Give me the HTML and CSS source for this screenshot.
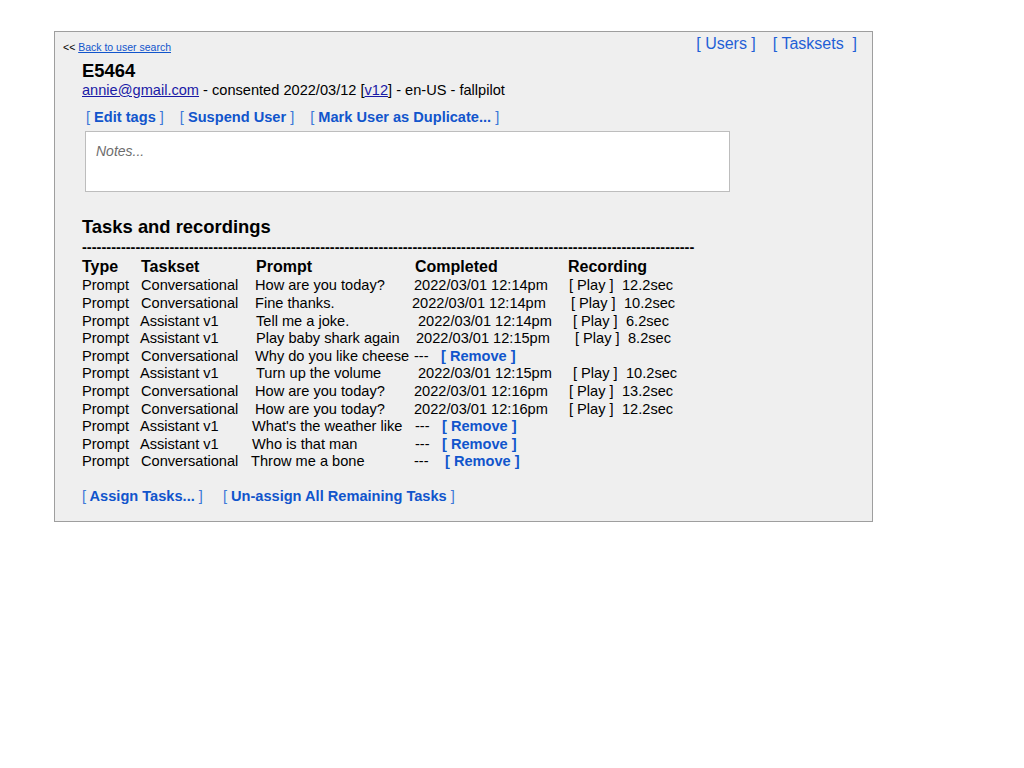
FILE: index.html
```html
<!DOCTYPE html>
<html lang="en">
<head>
<meta charset="utf-8">
<title>E5464</title>
<link rel="stylesheet" href="styles.css">
</head>
<body>
<div class="panel">
  <div class="topbar">
    <div class="back">&lt;&lt; <a href="#">Back to user search</a></div>
    <nav class="nav">
      <a href="#" class="navlink">[ Users ]</a>
      <a href="#" class="navlink">[ Tasksets&nbsp; ]</a>
    </nav>
  </div>
  <div class="content">
    <h1 class="uid">E5464</h1>
    <div class="meta"><a href="#" class="plain">annie@gmail.com</a> - consented 2022/03/12 [<a href="#" class="plain">v12</a>] - en-US - fallpilot</div>
    <div class="actions">
      <a href="#" class="act"><span class="br">[</span> Edit tags <span class="br">]</span></a>
      <a href="#" class="act"><span class="br">[</span> Suspend User <span class="br">]</span></a>
      <a href="#" class="act"><span class="br">[</span> Mark User as Duplicate... <span class="br">]</span></a>
    </div>
    <div class="notes">Notes...</div>

    <h2 class="section">Tasks and recordings</h2>
    <div class="dashes">------------------------------------------------------------------------------------------------------------------------------</div>

    <div class="table">
      <div class="row head">
        <span class="c-type">Type</span><span class="c-set">Taskset</span><span class="c-prompt sh1">Prompt</span><span class="c-done sh1">Completed</span><span class="c-rec shm1">Recording</span>
      </div>
      <div class="row">
        <span class="c-type">Prompt</span><span class="c-set">Conversational</span><span class="c-prompt">How are you today?</span><span class="c-done">2022/03/01 12:14pm</span><span class="c-rec"><span class="play">[ Play ]</span><span class="dur">12.2sec</span></span>
      </div>
      <div class="row">
        <span class="c-type">Prompt</span><span class="c-set">Conversational</span><span class="c-prompt">Fine thanks.</span><span class="c-done shm2">2022/03/01 12:14pm</span><span class="c-rec sh2"><span class="play">[ Play ]</span><span class="dur">10.2sec</span></span>
      </div>
      <div class="row">
        <span class="c-type">Prompt</span><span class="c-set shm1">Assistant v1</span><span class="c-prompt sh1">Tell me a joke.</span><span class="c-done sh4">2022/03/01 12:14pm</span><span class="c-rec sh4"><span class="play">[ Play ]</span><span class="dur">6.2sec</span></span>
      </div>
      <div class="row">
        <span class="c-type">Prompt</span><span class="c-set shm1">Assistant v1</span><span class="c-prompt sh1">Play baby shark again</span><span class="c-done sh2">2022/03/01 12:15pm</span><span class="c-rec sh6"><span class="play">[ Play ]</span><span class="dur">8.2sec</span></span>
      </div>
      <div class="row">
        <span class="c-type">Prompt</span><span class="c-set">Conversational</span><span class="c-prompt">Why do you like cheese</span><span class="c-done"><span class="none">---</span><a href="#" class="act rm"><span class="br">[</span> Remove <span class="br">]</span></a></span>
      </div>
      <div class="row">
        <span class="c-type">Prompt</span><span class="c-set shm1">Assistant v1</span><span class="c-prompt sh1">Turn up the volume</span><span class="c-done sh4">2022/03/01 12:15pm</span><span class="c-rec sh4"><span class="play">[ Play ]</span><span class="dur">10.2sec</span></span>
      </div>
      <div class="row">
        <span class="c-type">Prompt</span><span class="c-set">Conversational</span><span class="c-prompt">How are you today?</span><span class="c-done">2022/03/01 12:16pm</span><span class="c-rec"><span class="play">[ Play ]</span><span class="dur">13.2sec</span></span>
      </div>
      <div class="row">
        <span class="c-type">Prompt</span><span class="c-set">Conversational</span><span class="c-prompt">How are you today?</span><span class="c-done">2022/03/01 12:16pm</span><span class="c-rec"><span class="play">[ Play ]</span><span class="dur">12.2sec</span></span>
      </div>
      <div class="row">
        <span class="c-type">Prompt</span><span class="c-set shm1">Assistant v1</span><span class="c-prompt shm3">What's the weather like</span><span class="c-done sh1"><span class="none">---</span><a href="#" class="act rm"><span class="br">[</span> Remove <span class="br">]</span></a></span>
      </div>
      <div class="row">
        <span class="c-type">Prompt</span><span class="c-set shm1">Assistant v1</span><span class="c-prompt shm3">Who is that man</span><span class="c-done sh1"><span class="none">---</span><a href="#" class="act rm"><span class="br">[</span> Remove <span class="br">]</span></a></span>
      </div>
      <div class="row">
        <span class="c-type">Prompt</span><span class="c-set">Conversational</span><span class="c-prompt shm4">Throw me a bone</span><span class="c-done"><span class="none">---</span><a href="#" class="act rm wide"><span class="br">[</span> Remove <span class="br">]</span></a></span>
      </div>
    </div>

    <div class="bottom">
      <a href="#" class="act"><span class="br">[</span> Assign Tasks... <span class="br">]</span></a>
      <a href="#" class="act"><span class="br">[</span> Un-assign All Remaining Tasks <span class="br">]</span></a>
    </div>
  </div>
</div>
</body>
</html>
```

FILE: styles.css
```css
html, body {
  margin: 0;
  padding: 0;
  background: #ffffff;
}

body {
  font-family: "Liberation Sans", Arial, sans-serif;
  font-size: 14.6px;
  color: #000000;
}

.panel {
  margin: 31px 0 0 54px;
  width: 817px;
  border: 1px solid #9e9e9e;
  background: #efefef;
  padding-bottom: 16px;
}

.topbar {
  height: 29px;
  display: flex;
  justify-content: space-between;
  align-items: flex-start;
}

.back {
  margin: 9px 0 0 8px;
  font-size: 10.5px;
  line-height: 13px;
  color: #000;
}

.back a {
  color: #1155cc;
  text-decoration: underline;
}

.nav {
  display: flex;
  gap: 17px;
  margin: 2px 15px 0 0;
}

.navlink {
  font-size: 16px;
  line-height: 20px;
  color: #1f5fd6;
  text-decoration: none;
}

.content {
  padding-left: 27px;
}

.uid {
  margin: 0;
  font-size: 18.4px;
  line-height: 20px;
  font-weight: bold;
}

.meta {
  line-height: 18px;
}

.plain {
  color: #1a1aa6;
  text-decoration: underline;
}

.actions {
  display: flex;
  gap: 16px;
  margin: 9px 0 0 4px;
  line-height: 18px;
}

.act {
  color: #1155cc;
  font-weight: bold;
  text-decoration: none;
  white-space: nowrap;
}

.act .br {
  font-weight: normal;
  color: #3c78d8;
}

.rm .br {
  font-weight: bold;
  color: #1155cc;
}

.notes {
  margin: 5px 0 0 3px;
  width: 623px;
  height: 48px;
  background: #ffffff;
  border: 1px solid #bdbdbd;
  padding: 11px 10px 0 10px;
  font-size: 14px;
  font-style: italic;
  color: #6d6d6d;
  line-height: 16px;
}

.section {
  margin: 24px 0 0 0;
  font-size: 18.4px;
  line-height: 22px;
  font-weight: bold;
}

.dashes {
  margin-top: 2px;
  white-space: nowrap;
  font-weight: bold;
  font-size: 14.6px;
  line-height: 14px;
}

.table {
  margin-top: 3px;
}

.row {
  display: grid;
  grid-template-columns: 59px 114px 159px 155px auto;
  line-height: 17.6px;
  white-space: nowrap;
}

.row.head {
  font-weight: bold;
  font-size: 16px;
  line-height: 20.4px;
}

.play {
  display: inline-block;
  width: 53px;
}

.none {
  display: inline-block;
  width: 27px;
}

.rm.wide {
  margin-left: 4px;
}

.sh1 { margin-left: 1px; }
.sh2 { margin-left: 2px; }
.sh4 { margin-left: 4px; }
.sh6 { margin-left: 6px; }
.shm1 { margin-left: -1px; }
.shm2 { margin-left: -2px; }
.shm3 { margin-left: -3px; }
.shm4 { margin-left: -4px; }

.bottom {
  display: flex;
  gap: 20px;
  margin-top: 16px;
  line-height: 18px;
}
```
